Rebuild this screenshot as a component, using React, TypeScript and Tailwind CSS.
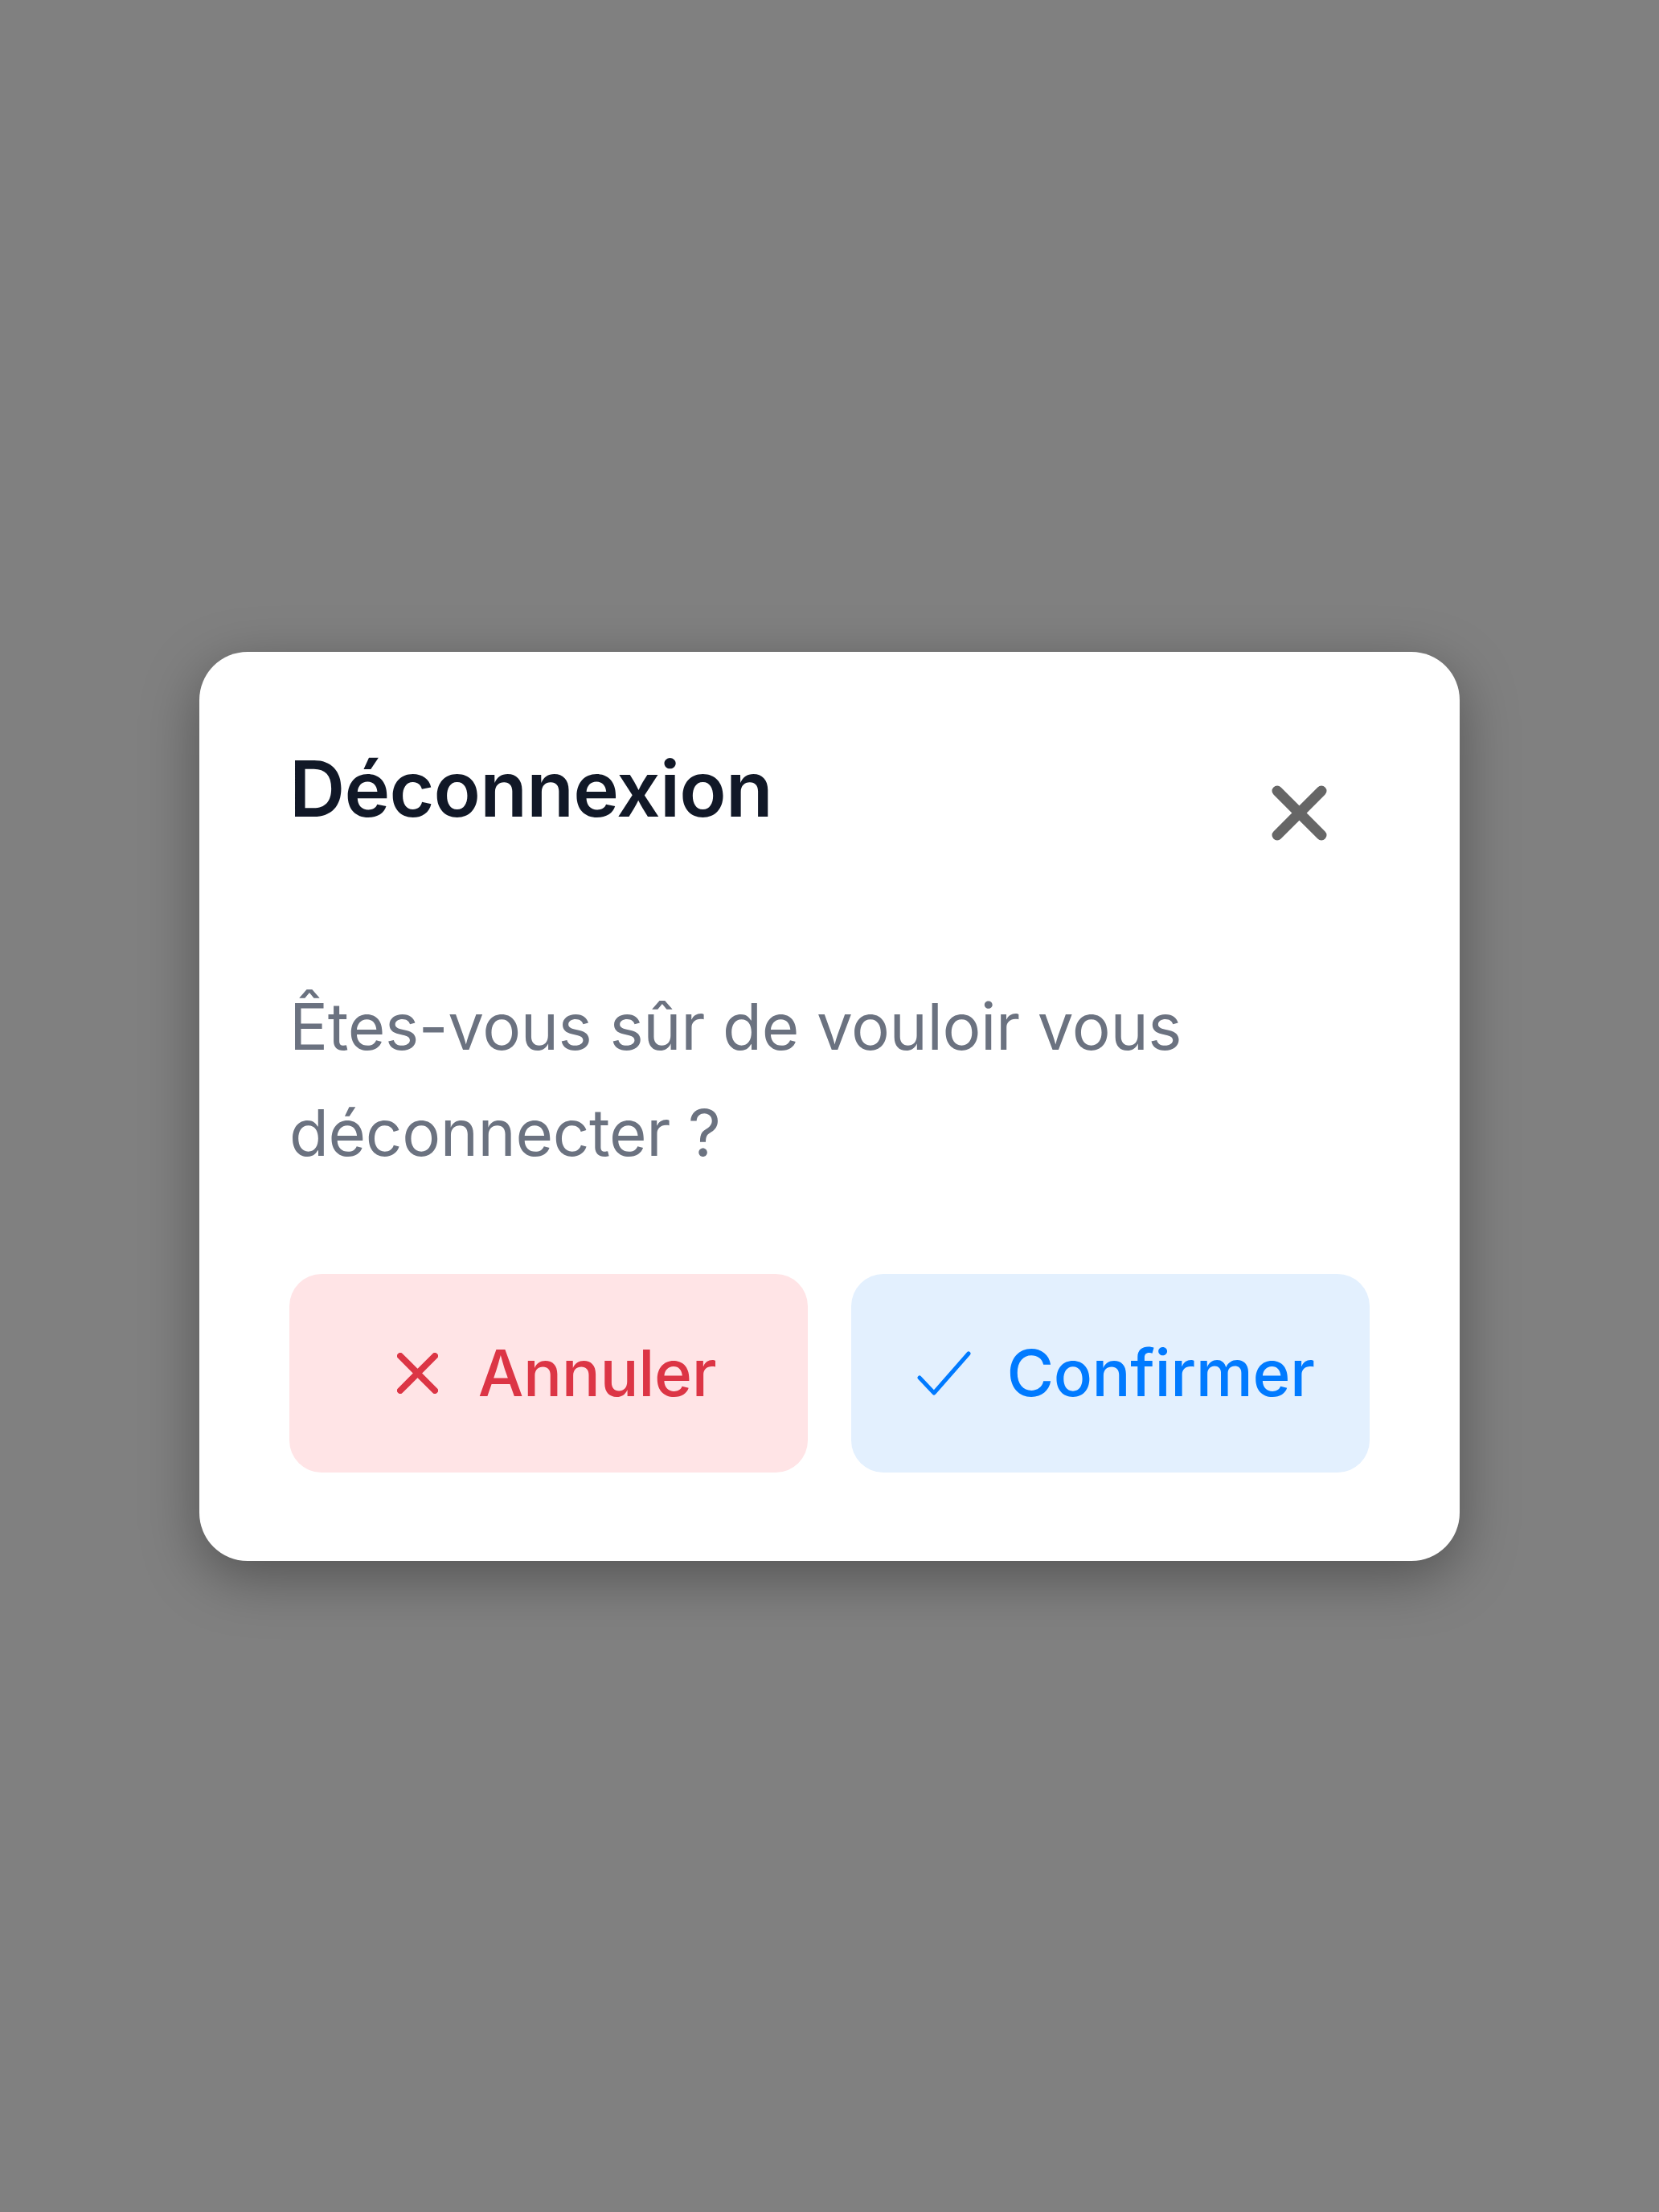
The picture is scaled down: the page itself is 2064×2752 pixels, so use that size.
import React from "react";

const font = { fontFamily: "Inter, 'Noto Sans', 'Liberation Sans', sans-serif" };

const CloseIcon = () => (
  <svg width="69" height="69" viewBox="0 0 69 69" fill="none">
    <path
      d="M7 7L62 62M62 7L7 62"
      stroke="#666666"
      strokeWidth="13"
      strokeLinecap="round"
    />
  </svg>
);

const CancelIcon = () => (
  <svg width="51" height="51" viewBox="0 0 51 51" fill="none">
    <path
      d="M4 4L47 47M47 4L4 47"
      stroke="#dc3545"
      strokeWidth="8"
      strokeLinecap="round"
    />
  </svg>
);

const CheckIcon = () => (
  <svg width="67" height="55" viewBox="0 0 67 55" fill="none">
    <path
      d="M3 33L21 52L64 3"
      stroke="#007aff"
      strokeWidth="5"
      strokeLinecap="round"
      strokeLinejoin="round"
    />
  </svg>
);

export default function App() {
  return (
    <div
      className="min-h-screen w-full bg-[#808080] flex items-center justify-center"
      style={font}
    >
      <div className="w-[1568px] rounded-[60px] bg-white px-[112px] pt-[113px] pb-[110px] shadow-[0_20px_70px_rgba(0,0,0,0.35)]">
        <div className="flex items-start justify-between">
          <h2 className="text-[96px] leading-[1.2] font-semibold tracking-[-0.8px] text-[#111827]">
            Déconnexion
          </h2>
          <button className="mt-[53px] mr-[53px]" aria-label="Fermer">
            <CloseIcon />
          </button>
        </div>

        <p className="mt-[165px] text-[80px] leading-[132px] tracking-[-0.4px] text-[#6b7280]">
          Êtes-vous sûr de vouloir vous déconnecter ?
        </p>

        <div className="mt-[110px] grid grid-cols-2 gap-[54px]">
          <button className="h-[247px] rounded-[40px] bg-[#ffe4e6] pl-[20px] flex items-center justify-center gap-[50px] text-[80px] font-medium tracking-[-0.4px] text-[#dc3545]">
            <CancelIcon />
            <span>Annuler</span>
          </button>
          <button className="h-[247px] rounded-[40px] bg-[#e3f0fe] pl-[14px] flex items-center justify-center gap-[44px] text-[80px] font-medium tracking-[-0.4px] text-[#007aff]">
            <CheckIcon />
            <span>Confirmer</span>
          </button>
        </div>
      </div>
    </div>
  );
}
